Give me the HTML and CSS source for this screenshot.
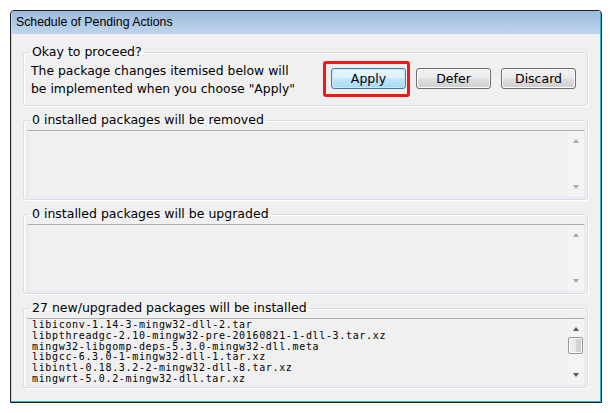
FILE: index.html
```html
<!DOCTYPE html>
<html>
<head>
<meta charset="utf-8">
<title>Schedule of Pending Actions</title>
<link rel="stylesheet" href="styles.css">
</head>
<body>
<div class="window">
  <div class="titlebar">Schedule of Pending Actions</div>
  <div class="content">
    <fieldset class="group group-proceed">
      <legend>Okay to proceed?</legend>
      <div class="proceed">
        <p class="msg">The package changes itemised below will<br>be implemented when you choose "Apply"</p>
        <div class="buttons">
          <div class="mark-wrap">
            <button class="btn btn-default">Apply</button>
            <span class="mark"></span>
          </div>
          <button class="btn">Defer</button>
          <button class="btn">Discard</button>
        </div>
      </div>
    </fieldset>

    <fieldset class="group">
      <legend>0 installed packages will be removed</legend>
      <div class="listbox">
        <div class="list"></div>
        <div class="scrollbar disabled">
          <span class="arrow up"></span>
          <span class="track"></span>
          <span class="arrow down"></span>
        </div>
      </div>
    </fieldset>

    <fieldset class="group">
      <legend>0 installed packages will be upgraded</legend>
      <div class="listbox">
        <div class="list"></div>
        <div class="scrollbar disabled">
          <span class="arrow up"></span>
          <span class="track"></span>
          <span class="arrow down"></span>
        </div>
      </div>
    </fieldset>

    <fieldset class="group">
      <legend>27 new/upgraded packages will be installed</legend>
      <div class="listbox">
        <div class="list mono">
          <div>libiconv-1.14-3-mingw32-dll-2.tar</div>
          <div>libpthreadgc-2.10-mingw32-pre-20160821-1-dll-3.tar.xz</div>
          <div>mingw32-libgomp-deps-5.3.0-mingw32-dll.meta</div>
          <div>libgcc-6.3.0-1-mingw32-dll-1.tar.xz</div>
          <div>libintl-0.18.3.2-2-mingw32-dll-8.tar.xz</div>
          <div>mingwrt-5.0.2-mingw32-dll.tar.xz</div>
        </div>
        <div class="scrollbar">
          <span class="arrow up"></span>
          <span class="track"><span class="thumb"></span></span>
          <span class="arrow down"></span>
        </div>
      </div>
    </fieldset>
  </div>
</div>
</body>
</html>
```

FILE: styles.css
```css
html, body {
  margin: 0;
  padding: 0;
  background: #ffffff;
}

body {
  padding: 10px;
}

.window {
  width: 590px;
  height: 391px;
  border: 1px solid #1e1e1e;
  border-radius: 4px 4px 0 0;
  box-shadow: inset -1px -1px 0 #33b5e0, inset 1px 0 0 #c8d9ec;
  background: #f0f0f0;
  display: flex;
  flex-direction: column;
  overflow: hidden;
}

.titlebar {
  height: 23px;
  flex: none;
  background: linear-gradient(to bottom, #9fbadb 0%, #b0c9e5 55%, #bed4ec 100%);
  font-family: "Liberation Sans", Arial, sans-serif;
  font-size: 12.3px;
  line-height: 23px;
  padding-left: 4px;
  color: #000;
  margin: 0 1px 0 1px;
}

.content {
  flex: 1;
  padding: 11px 12px 0 12px;
  margin-right: 1px;
  display: flex;
  flex-direction: column;
  gap: 7px;
  font-family: "DejaVu Sans", Verdana, sans-serif;
  font-size: 12.5px;
  color: #000;
}

.group {
  margin: 0;
  padding: 0 2px 1px 3px;
  border: 1px solid #d5dfe5;
  border-radius: 3px;
  box-shadow: inset 1px 1px 0 #ffffff, 1px 1px 0 #ffffff;
  min-width: 0;
}

.group legend {
  margin-left: 3px;
  padding: 0 2px;
  line-height: 14px;
  font-size: 12.5px;
}

.proceed {
  display: flex;
  align-items: flex-start;
  justify-content: space-between;
  padding: 0 9px 0 4px;
  height: 45px;
}

.msg {
  margin: 3px 0 0 0;
  line-height: 18px;
  font-size: 12.4px;
}

.buttons {
  display: flex;
  gap: 10px;
  margin-top: 9px;
}

.mark-wrap {
  position: relative;
}

.mark {
  position: absolute;
  left: -8px;
  top: -7px;
  right: -4px;
  bottom: -8px;
  border: 3px solid #f01818;
  border-radius: 3px;
  pointer-events: none;
}

.btn {
  display: block;
  width: 75px;
  height: 21px;
  padding: 0;
  border: 1px solid #707070;
  border-radius: 3px;
  background: linear-gradient(to bottom, #f2f2f2 0%, #ebebeb 48%, #dddddd 52%, #cfcfcf 100%);
  box-shadow: inset 0 0 0 1px #fbfbfb;
  font-family: "DejaVu Sans", Verdana, sans-serif;
  font-size: 12.5px;
  color: #000;
}

.btn-default {
  border-color: #3c7fb1;
  background: linear-gradient(to bottom, #eaf6fd 0%, #d9f0fc 48%, #bee6fd 52%, #a7d9f5 100%);
  box-shadow: inset 0 0 0 1px #c8e7f9;
}

.listbox {
  display: flex;
  height: 66px;
  margin-top: 3px;
  border: 1px solid #e3e9ef;
  border-top-color: #abadb3;
  background: #f0f0f0;
}

.list {
  flex: 1;
  min-width: 0;
  overflow: hidden;
}

.mono {
  font-family: "DejaVu Sans Mono", "Liberation Mono", monospace;
  font-size: 10px;
  letter-spacing: 0.66px;
  line-height: 10.8px;
  padding: 1px 0 0 4px;
  white-space: nowrap;
}

.scrollbar {
  width: 17px;
  flex: none;
  display: flex;
  flex-direction: column;
  align-items: center;
  background: #f4f4f4;
  border-left: 1px solid #ececec;
}

.arrow {
  flex: none;
  width: 0;
  height: 0;
  margin: 8px 0 7px;
  border-left: 3.5px solid transparent;
  border-right: 3.5px solid transparent;
}

.arrow.up {
  border-bottom: 4px solid #5a5a5a;
}

.arrow.down {
  margin: 7px 0 8px;
  border-top: 4px solid #5a5a5a;
}

.disabled .arrow.up {
  border-bottom-color: #a8a8a8;
}

.disabled .arrow.down {
  border-top-color: #a8a8a8;
}

.track {
  flex: 1;
  align-self: stretch;
  display: flex;
  justify-content: center;
}

.thumb {
  width: 13px;
  height: 15px;
  margin-top: -1px;
  border: 1px solid #979797;
  border-radius: 2px;
  background: linear-gradient(to right, #f2f2f2 0%, #e8e8e8 50%, #d6d6d6 51%, #cdcdcd 100%);
  box-shadow: inset 0 0 0 1px #fafafa;
}
```
